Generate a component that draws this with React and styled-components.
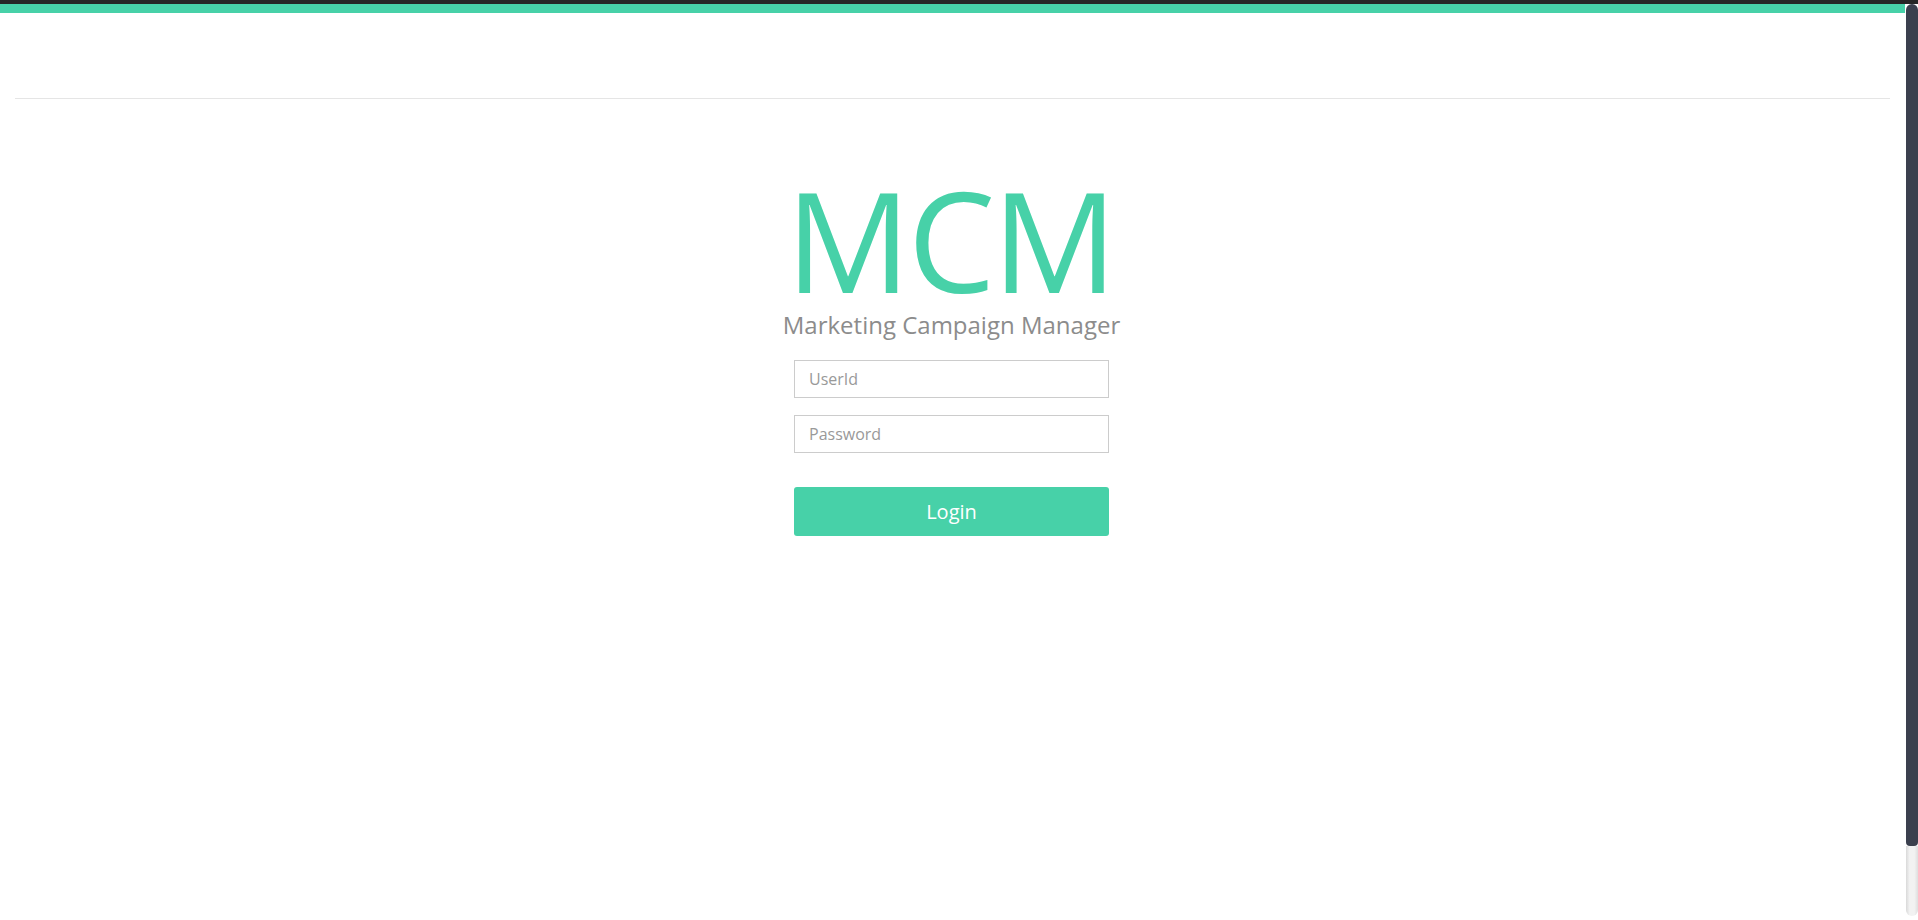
import React from 'react';
import styled, { createGlobalStyle } from 'styled-components';

const Global = createGlobalStyle`
  html, body {
    margin: 0;
    padding: 0;
    height: 100%;
    overflow: hidden;
    background: #fff;
    font-family: 'Open Sans', 'Liberation Sans', sans-serif;
  }
`;

const Frame = styled.div`
  display: flex;
  flex-direction: column;
  height: 100vh;
`;

const TopEdge = styled.div`
  height: 4px;
  flex: none;
  background: #262626;
`;

const Body = styled.div`
  flex: 1;
  display: flex;
  min-height: 0;
`;

const Viewport = styled.div`
  flex: 1;
  overflow: hidden;
`;

const Rail = styled.div`
  width: 12px;
  flex: none;
  display: flex;
  flex-direction: column;
  padding: 0 0 4px 1px;
  background: #fff;
`;

const Thumb = styled.div`
  height: 842px;
  border-radius: 6px 6px 4px 4px;
  background: #3b404e;
`;

const Track = styled.div`
  flex: 1;
  border-radius: 0 0 6px 6px;
  background: linear-gradient(to right, #d9d9d9, #f2f2f2 30%, #f2f2f2 70%, #dedede);
`;

const Page = styled.div`
  min-height: 995px;
`;

const Accent = styled.div`
  height: 9px;
  background: #47d1a8;
`;

const Header = styled.header`
  height: 85px;
  margin: 0 15px;
  border-bottom: 1px solid #e5e5e5;
`;

const LoginBox = styled.main`
  display: flex;
  flex-direction: column;
  align-items: center;
  padding-top: 70px;
  padding-right: 2px;
`;

const Logo = styled.h1`
  margin: 0;
  font-weight: 400;
  font-size: 139px;
  line-height: 140px;
  letter-spacing: -3px;
  text-indent: -3px;
  color: #47d1a8;
`;

const Tagline = styled.p`
  margin: 1px 0 0;
  font-size: 24px;
  line-height: 29px;
  color: #8c8c8c;
`;

const Form = styled.form`
  display: flex;
  flex-direction: column;
  width: 315px;
  margin-top: 21px;
`;

const Field = styled.input`
  box-sizing: border-box;
  height: 38px;
  margin-bottom: ${(p) => p.$gap || 17}px;
  padding: 0 14px;
  border: 1px solid #cccccc;
  border-radius: 0;
  font-family: inherit;
  font-size: 16px;
  color: #555;
  outline: none;

  &::placeholder {
    color: #999;
  }
`;

const Button = styled.button`
  height: 49px;
  border: none;
  border-radius: 3px;
  background: #47d1a8;
  color: #fff;
  font-family: inherit;
  font-size: 20px;
  cursor: pointer;
`;

const App = () => {
  return (
    <Frame>
      <Global />
      <TopEdge />
      <Body>
        <Viewport>
          <Page>
            <Accent />
            <Header />
            <LoginBox>
              <Logo>MCM</Logo>
              <Tagline>Marketing Campaign Manager</Tagline>
              <Form onSubmit={(e) => e.preventDefault()}>
                <Field type="text" placeholder="UserId" />
                <Field type="password" placeholder="Password" $gap={34} />
                <Button type="submit">Login</Button>
              </Form>
            </LoginBox>
          </Page>
        </Viewport>
        <Rail>
          <Thumb />
          <Track />
        </Rail>
      </Body>
    </Frame>
  );
};

export default App;
